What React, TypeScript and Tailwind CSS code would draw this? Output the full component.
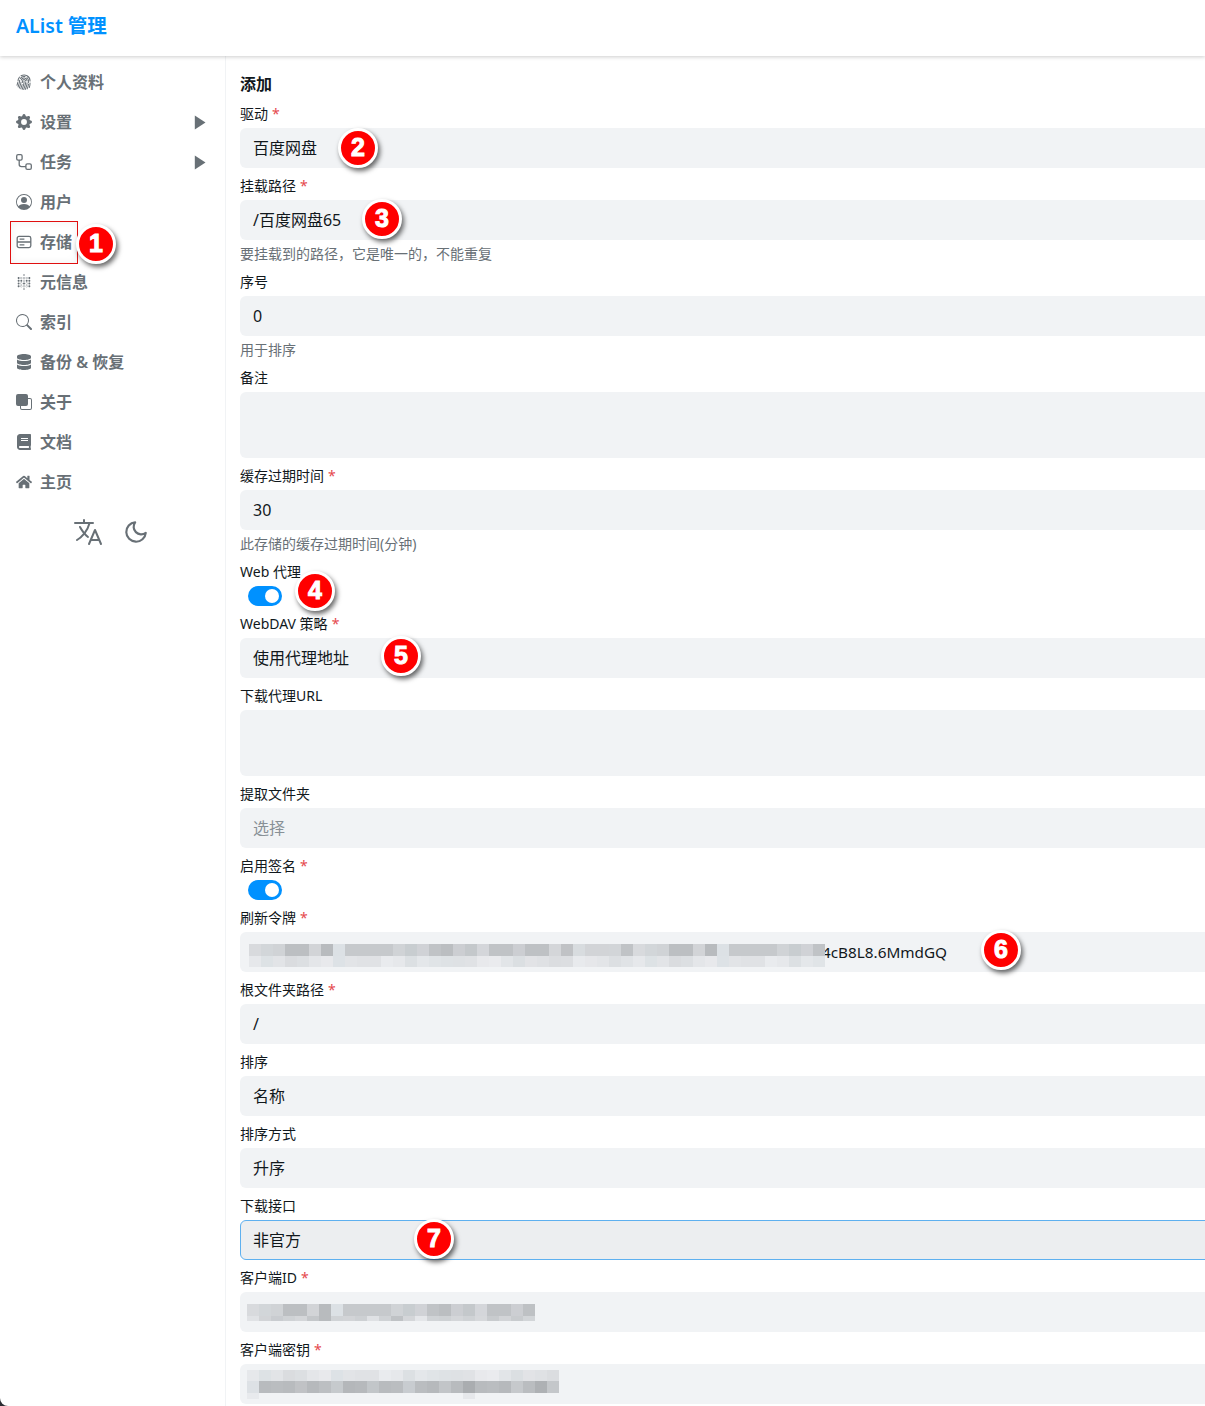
import React from 'react';
import { BsFingerprint, BsGearFill, BsPersonCircle, BsSearch, BsFront } from 'react-icons/bs';
import { SiMetabase } from 'react-icons/si';
import { FaDatabase, FaBook, FaHome } from 'react-icons/fa';
import { IoLanguageOutline } from 'react-icons/io5';
import { FiMoon } from 'react-icons/fi';

function TaskIcon() {
  return (
    <svg width="16" height="16" viewBox="0 0 16 16" fill="none" stroke="currentColor" strokeWidth="1.3">
      <rect x="0.7" y="0.7" width="5.4" height="5.4" rx="1.4" />
      <rect x="9.9" y="9.9" width="5.4" height="5.4" rx="1.4" />
      <path d="M3.2 6.1V10.5C3.2 12 4 12.6 5.5 12.6H9.9" />
    </svg>
  );
}

function StorageIcon() {
  return (
    <svg width="16" height="16" viewBox="0 0 16 16" fill="none" stroke="currentColor" strokeWidth="1.3">
      <rect x="1.2" y="2.4" width="13.6" height="11.2" rx="1.8" />
      <path d="M1.2 8H14.8M3.6 5.2H8.4M3.6 10.8H8.4" />
    </svg>
  );
}

function Triangle() {
  return (
    <svg width="12" height="15" viewBox="0 0 12 15" fill="#687076">
      <path d="M0.8 0.5L11.5 7.5L0.8 14.5Z" />
    </svg>
  );
}

const NAV = [
  { title: '个人资料', Icon: BsFingerprint },
  { title: '设置', Icon: BsGearFill, arrow: true },
  { title: '任务', Icon: TaskIcon, arrow: true },
  { title: '用户', Icon: BsPersonCircle },
  { title: '存储', Icon: StorageIcon, active: true },
  { title: '元信息', Icon: SiMetabase },
  { title: '索引', Icon: BsSearch },
  { title: '备份 & 恢复', Icon: FaDatabase },
  { title: '关于', Icon: BsFront },
  { title: '文档', Icon: FaBook },
  { title: '主页', Icon: FaHome },
];

const BADGES = [
  { n: 1, x: 96, y: 244 },
  { n: 2, x: 358, y: 148 },
  { n: 3, x: 382, y: 219 },
  { n: 4, x: 315, y: 591 },
  { n: 5, x: 401, y: 656 },
  { n: 6, x: 1001, y: 950 },
  { n: 7, x: 434, y: 1239 },
];

// mosaic colours for the blurred secrets
const DARK = ['#d8dadd', '#d2d6d9', '#d0d3d6', '#bcbfc2', '#bcbfc2', '#d2d4d7', '#b8bbbe', '#dce1e5', '#c6c9cc', '#c6c9cc', '#c6c9cc', '#c6c9cc', '#d0d3d6', '#c8cdd0', '#d0d2d6', '#c0c3c6', '#bbbec1', '#ccced2', '#c4c8cb', '#d4d6da', '#c0c3c6', '#c0c3c6', '#ccced2', '#bec1c4', '#bec1c4', '#d4d6d9', '#c0c2c5', '#d8dcdf', '#d2d4d7', '#d2d4d7', '#d2d5d8', '#c0c3c6'];
const LIGHT = ['#e6e8eb', '#dde2e5', '#e2e4e7', '#dadcdf', '#dcdfe2', '#e4e6e9', '#e8e9ec', '#dde2e6', '#e2e4e7', '#e0e2e5', '#e0e2e5', '#e9ebee', '#e6e8eb', '#dce0e3', '#e4e7ea', '#e0e4e7', '#dee2e5', '#dee1e4', '#e0e2e5', '#e8e9ec', '#eaebee', '#e2e5e8', '#dbdfe2', '#e2e3e6', '#dfe1e4', '#dbdde0', '#dcdee1', '#e8eaed', '#e6e7ea', '#e3e5e8', '#dcdfe2', '#e0e3e6'];
const MID = ['#e0e2e5', '#d2d4d7', '#c9ccd0', '#cfd2d5', '#d4d6d9', '#c4c7ca', '#b8bbbe', '#d0d3d6', '#d2d4d7', '#cdd0d3', '#dfe1e4', '#cfd2d5', '#bfc2c5', '#d4d6d9', '#e4e6e9', '#d0d3d6', '#ced1d4', '#d4d6d9', '#cfd2d5', '#d6d8db', '#c8cbce', '#d2d4d7', '#c8cbce', '#d2d5d8'];
const DEEP = ['#dde1e5', '#b8bbbe', '#babdc0', '#b8bbbe', '#c0c2c5', '#b6b9bc', '#bcbfc2', '#c6cacd', '#b4b7ba', '#b6b9bc', '#c2c6c9', '#b8bbbe', '#babdc0', '#c8ccd0', '#babdc0', '#b6b9bc', '#c2c5c8', '#b8bbbe', '#aaadb0', '#b8bbbe', '#babdc0', '#b6b9bc', '#c6c9cc', '#babdc0', '#aeb1b4', '#c4c7ca'];
const SPARSE = ['#e8eaed', 'transparent', 'transparent', 'transparent', 'transparent', 'transparent', 'transparent', 'transparent', 'transparent', 'transparent', 'transparent', 'transparent', 'transparent', 'transparent', 'transparent', 'transparent', 'transparent', 'transparent', '#e6e8eb'];

function Mosaic({ cols, rows, className }: { cols: number; rows: { h: number; colors: string[]; sparse?: boolean }[]; className: string }) {
  return (
    <div className={`relative z-10 flex shrink-0 flex-col ${className}`}>
      {rows.map((row, r) => (
        <div key={r} className="flex" style={{ height: row.h }}>
          {Array.from({ length: cols }).map((_, i) => (
            <div
              key={i}
              className="h-full w-[12px]"
              style={{ backgroundColor: row.sparse ? row.colors[i] || 'transparent' : row.colors[i % row.colors.length] }}
            />
          ))}
        </div>
      ))}
    </div>
  );
}

function Label({ text, required }: { text: string; required?: boolean }) {
  return (
    <div className="flex h-5 items-center text-[14px] leading-5 text-[#11181c]">
      {text}
      {required && <span className="ml-1 text-[#e5484d]">*</span>}
    </div>
  );
}

function Box({ children, muted, focus, tall }: { children?: React.ReactNode; muted?: boolean; focus?: boolean; tall?: boolean }) {
  return (
    <div
      className={`mt-1 flex w-[1100px] items-center rounded-md px-[13px] text-[16px] ${tall ? 'h-[66px]' : 'h-10'} ${muted ? 'text-[#889096]' : 'text-[#11181c]'} ${focus ? 'border border-[#5eb0ef] bg-[#eceef0] pl-3' : 'bg-[#f1f3f5]'}`}
    >
      {children}
    </div>
  );
}

function Help({ text }: { text: string }) {
  return <div className="mt-1 h-5 text-[14px] leading-5 text-[#687076]">{text}</div>;
}

function Switch() {
  return (
    <div className="mt-1 ml-2 flex h-5 w-[34px] items-center justify-end rounded-full bg-[#0091ff] pr-[3px]">
      <div className="h-[14px] w-[14px] rounded-full bg-white" />
    </div>
  );
}

function Field({ children }: { children: React.ReactNode }) {
  return <div className="flex flex-col">{children}</div>;
}

export default function App() {
  return (
    <div className="relative h-[1406px] w-[1205px] overflow-hidden bg-[#2b2d33] font-['Noto_Sans','Noto_Sans_CJK_SC',sans-serif]">
      <div className="flex h-full flex-col overflow-hidden rounded-bl-lg bg-white">
        <header className="z-10 flex h-14 shrink-0 items-center bg-white pb-1 pl-4 text-[19.5px] font-semibold text-[#0091ff] shadow-[0_1px_4px_rgba(0,0,0,0.2)]">
          AList 管理
        </header>
        <div className="flex flex-1 overflow-hidden">
          <aside className="w-[226px] shrink-0 border-r border-[#f1f3f5] pt-[6px] pl-[10px] pr-[10px]">
            <nav className="flex flex-col">
              {NAV.map(({ title, Icon, arrow, active }) => (
                <div key={title} className={`flex h-10 items-center justify-between pl-[6px] pr-[9px] text-[16px] font-semibold text-[#687076] ${active ? 'relative' : ''}`}>
                  <div className="flex items-center gap-2">
                    <span className="flex w-4 justify-center">
                      <Icon size={16} />
                    </span>
                    <span>{title}</span>
                  </div>
                  {arrow && <Triangle />}
                  {active && <div className="absolute -top-px left-0 h-[43px] w-[68px] border border-[#e01010] shadow-[inset_0_0_8px_rgba(0,0,0,0.06)]" />}
                </div>
              ))}
            </nav>
            <div className="mt-[14px] flex items-center justify-center gap-[19px] pr-[5px] text-[#687076]">
              <IoLanguageOutline size={32} />
              <FiMoon size={26} />
            </div>
          </aside>
          <main className="flex flex-1 flex-col gap-2 overflow-hidden pt-[18px] pl-[14px]">
            <div className="mb-[2px] h-5 text-[16px] font-semibold leading-5 text-[#11181c]">添加</div>
            <Field><Label text="驱动" required /><Box>百度网盘</Box></Field>
            <Field><Label text="挂载路径" required /><Box>/百度网盘65</Box><Help text="要挂载到的路径，它是唯一的，不能重复" /></Field>
            <Field><Label text="序号" /><Box>0</Box><Help text="用于排序" /></Field>
            <Field><Label text="备注" /><Box tall /></Field>
            <Field><Label text="缓存过期时间" required /><Box>30</Box><Help text="此存储的缓存过期时间(分钟)" /></Field>
            <Field><Label text="Web 代理" /><Switch /></Field>
            <Field><Label text="WebDAV 策略" required /><Box>使用代理地址</Box></Field>
            <Field><Label text="下载代理URL" /><Box tall /></Field>
            <Field><Label text="提取文件夹" /><Box muted>选择</Box></Field>
            <Field><Label text="启用签名" required /><Switch /></Field>
            <Field>
              <Label text="刷新令牌" required />
              <Box>
                <Mosaic cols={48} rows={[{ h: 12, colors: DARK }, { h: 11, colors: LIGHT }]} className="-ml-1 mt-[7px]" />
                <span className="-ml-[3px] text-[15.3px]">4cB8L8.6MmdGQ</span>
              </Box>
            </Field>
            <Field><Label text="根文件夹路径" required /><Box>/</Box></Field>
            <Field><Label text="排序" /><Box>名称</Box></Field>
            <Field><Label text="排序方式" /><Box>升序</Box></Field>
            <Field><Label text="下载接口" /><Box focus>非官方</Box></Field>
            <Field>
              <Label text="客户端ID" required />
              <Box><Mosaic cols={24} rows={[{ h: 12, colors: DARK }, { h: 5, colors: MID }]} className="-ml-[6px]" /></Box>
            </Field>
            <Field>
              <Label text="客户端密钥" required />
              <Box>
                <Mosaic cols={26} rows={[{ h: 11, colors: LIGHT }, { h: 12, colors: DEEP }, { h: 6, colors: SPARSE, sparse: true }]} className="-ml-[6px]" />
              </Box>
            </Field>
          </main>
        </div>
      </div>
      {BADGES.map(({ n, x, y }) => (
        <div
          key={n}
          className="absolute flex h-10 w-10 items-center justify-center rounded-full border-[3px] border-white bg-[#ff0000] font-['Liberation_Sans',sans-serif] text-[25px] font-bold text-white shadow-[2px_3px_5px_rgba(0,0,0,0.6)] [-webkit-text-stroke:1px_white]"
          style={{ left: x - 20, top: y - 20 }}
        >
          {n}
        </div>
      ))}
    </div>
  );
}
